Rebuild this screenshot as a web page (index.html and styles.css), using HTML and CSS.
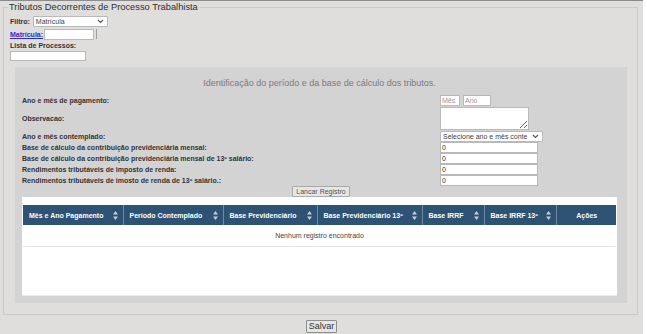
FILE: index.html
```html
<!DOCTYPE html>
<html lang="pt-BR">
<head>
<meta charset="utf-8">
<title>Tributos Decorrentes de Processo Trabalhista</title>
<link rel="stylesheet" href="styles.css">
</head>
<body>
<div class="page">
  <fieldset class="box">
    <legend class="legend">Tributos Decorrentes de Processo Trabalhista</legend>
    <div class="line">
      <span class="lbl">Filtro:</span>
      <span class="fake-select filtro">Matrícula<svg class="chev" width="7" height="5" viewBox="0 0 7 5"><path d="M1 1l2.5 2.5L6 1" fill="none" stroke="#555" stroke-width="1.1"/></svg></span>
    </div>
    <div class="line">
      <a class="link" href="#">Matrícula:</a>
      <input class="inp mat" type="text">
      <span class="stub"></span>
    </div>
    <div class="lbl block">Lista de Processos:</div>
    <input class="inp proc" type="text">

    <div class="panel">
      <div class="panel-title">Identificação do período e da base de cálculo dos tributos.</div>
      <div class="form">
        <span class="lbl">Ano e mês de pagamento:</span>
        <span class="pair"><input class="inp mes" type="text" placeholder="Mês"><input class="inp ano" type="text" placeholder="Ano"></span>

        <span class="lbl">Observacao:</span>
        <textarea class="ta"></textarea>

        <span class="lbl">Ano e mês contemplado:</span>
        <span class="fake-select contemplado">Selecione ano e mês conte<svg class="chev" width="7" height="5" viewBox="0 0 7 5"><path d="M1 1l2.5 2.5L6 1" fill="none" stroke="#555" stroke-width="1.1"/></svg></span>

        <span class="lbl">Base de cálculo da contribuição previdenciária mensal:</span>
        <input class="inp num" type="text" value="0">

        <span class="lbl">Base de cálculo da contribuição previdenciária mensal de 13º salário:</span>
        <input class="inp num" type="text" value="0">

        <span class="lbl">Rendimentos tributáveis de imposto de renda:</span>
        <input class="inp num" type="text" value="0">

        <span class="lbl">Rendimentos tributáveis de imosto de renda de 13º salário.:</span>
        <input class="inp num" type="text" value="0">
      </div>
      <div class="btn-row"><button class="btn small" type="button">Lancar Registro</button></div>
      <div class="table-wrap">
        <table class="grid">
          <colgroup>
            <col class="c1"><col class="c2"><col class="c3"><col class="c4"><col class="c5"><col class="c6"><col class="c7">
          </colgroup>
          <thead>
            <tr>
              <th><span class="th">Mês e Ano Pagamento<svg class="sort" width="5" height="9" viewBox="0 0 5 9"><path d="M2.5 0L5 3.5H0z M2.5 9L0 5.5H5z" fill="#c3ccd6"/></svg></span></th>
              <th><span class="th">Período Contemplado<svg class="sort" width="5" height="9" viewBox="0 0 5 9"><path d="M2.5 0L5 3.5H0z M2.5 9L0 5.5H5z" fill="#c3ccd6"/></svg></span></th>
              <th><span class="th">Base Previdenciário<svg class="sort" width="5" height="9" viewBox="0 0 5 9"><path d="M2.5 0L5 3.5H0z M2.5 9L0 5.5H5z" fill="#c3ccd6"/></svg></span></th>
              <th><span class="th">Base Previdenciário 13º<svg class="sort" width="5" height="9" viewBox="0 0 5 9"><path d="M2.5 0L5 3.5H0z M2.5 9L0 5.5H5z" fill="#c3ccd6"/></svg></span></th>
              <th><span class="th">Base IRRF<svg class="sort" width="5" height="9" viewBox="0 0 5 9"><path d="M2.5 0L5 3.5H0z M2.5 9L0 5.5H5z" fill="#c3ccd6"/></svg></span></th>
              <th><span class="th">Base IRRF 13º<svg class="sort" width="5" height="9" viewBox="0 0 5 9"><path d="M2.5 0L5 3.5H0z M2.5 9L0 5.5H5z" fill="#c3ccd6"/></svg></span></th>
              <th><span class="th center">Ações</span></th>
            </tr>
          </thead>
          <tbody>
            <tr><td class="empty" colspan="7">Nenhum registro encontrado</td></tr>
          </tbody>
        </table>
      </div>
    </div>
  </fieldset>
  <div class="save-row"><button class="btn big" type="button">Salvar</button></div>
</div>
</body>
</html>
```

FILE: styles.css
```css
html, body {
  margin: 0;
  padding: 0;
  background: #ffffff;
}

body {
  font-family: "Liberation Sans", Arial, sans-serif;
  color: #333;
}

.page {
  width: 643px;
  height: 334px;
  background: #dfdedc;
  border-top: 1px solid #8c8c8c;
  box-sizing: border-box;
  overflow: hidden;
}

.box {
  margin: 0 5px 0 3px;
  padding: 2px 0 11px 6px;
  border: 1px solid #cacac8;
  min-width: 0;
}

.legend {
  font-size: 9.3px;
  line-height: 12px;
  color: #2e2e2e;
  padding: 0 1px;
  margin-left: -2px;
}

.line {
  display: flex;
  align-items: center;
  height: 12px;
  margin-bottom: 1px;
}

.line + .line {
  margin-top: 1px;
}

.lbl {
  font-size: 7px;
  font-weight: bold;
  color: #333;
}

.lbl.block {
  display: block;
  margin-top: 0;
  line-height: 10px;
}

.link {
  font-size: 7px;
  font-weight: bold;
  color: #2b2bd6;
  text-decoration: underline;
}

.line .lbl {
  margin-right: 3px;
}

.fake-select {
  display: inline-flex;
  align-items: center;
  justify-content: space-between;
  box-sizing: border-box;
  height: 11px;
  background: #fff;
  border: 1px solid #b9b9b9;
  border-radius: 1px;
  font-size: 7px;
  color: #444;
  padding: 0 3px 0 2px;
  white-space: nowrap;
  overflow: hidden;
}

.filtro {
  width: 75px;
}

.contemplado {
  width: 103px;
}

.chev {
  flex: none;
  margin-left: 2px;
}

.inp {
  box-sizing: border-box;
  height: 11px;
  margin: 0;
  padding: 0 1px;
  border: 1px solid #b9b9b9;
  background: #fff;
  font-family: "Liberation Sans", Arial, sans-serif;
  font-size: 7px;
  color: #333;
  outline: none;
}

.inp::placeholder {
  color: #9a9a9a;
}

.mat {
  width: 50px;
  margin-left: 1px;
}

.stub {
  width: 1px;
  height: 10px;
  margin-left: 2px;
  border-left: 1px solid #9f9f9f;
}

.proc {
  display: block;
  width: 76px;
  height: 10px;
  margin-top: 0;
}

.panel {
  width: 612px;
  box-sizing: border-box;
  margin: 6px 0 0 5px;
  padding: 10px 10px 7px 7px;
  background: #d3d3d3;
}

.panel-title {
  text-align: center;
  font-size: 9px;
  line-height: 12px;
  color: #7a7a7a;
  margin-bottom: 6px;
}

.form {
  display: grid;
  grid-template-columns: 418px auto;
  align-items: center;
}

.form > .lbl {
  line-height: 10px;
}

.pair {
  display: flex;
  gap: 3px;
  height: 12px;
  align-items: flex-start;
}

.mes {
  width: 20px;
}

.ano {
  width: 28px;
}

.ta {
  box-sizing: border-box;
  width: 89px;
  height: 23px;
  margin: 0 0 1px;
  padding: 1px;
  border: 1px solid #b9b9b9;
  background: #fff;
  font-size: 7px;
  display: block;
}

.num {
  width: 98px;
  height: 11px;
  margin-bottom: 0;
}

.btn-row {
  display: flex;
  justify-content: center;
  padding-left: 3px;
}

.btn {
  font-family: "Liberation Sans", Arial, sans-serif;
  background: #e6e6e6;
  color: #333;
  border: 1px solid #a9a9a9;
  border-radius: 1px;
  margin: 0;
  cursor: default;
}

.btn.small {
  font-size: 7px;
  height: 11px;
  line-height: 9px;
  padding: 0 3px;
  color: #555;
}

.btn.big {
  font-size: 9px;
  height: 13px;
  line-height: 11px;
  padding: 0 2px;
  border-color: #8d8d8d;
}

.table-wrap {
  background: #fff;
  height: 99px;
  box-sizing: border-box;
  padding: 8px 1px 0 1px;
  border-bottom: 1px solid #ececec;
}

.grid {
  width: 593px;
  border-collapse: collapse;
  table-layout: fixed;
}

.grid th {
  background: #2d5274;
  color: #fff;
  font-size: 7px;
  font-weight: bold;
  height: 20px;
  padding: 0 5px 0 6px;
  text-align: left;
  border-left: 1px solid #6d8aa4;
  overflow: hidden;
}

.grid th:first-child {
  border-left: none;
}

.th {
  display: flex;
  align-items: center;
  justify-content: space-between;
  white-space: nowrap;
}

.th.center {
  justify-content: center;
}

.sort {
  flex: none;
}

.c1 { width: 100px; }
.c2 { width: 100px; }
.c3 { width: 94px; }
.c4 { width: 105px; }
.c5 { width: 62px; }
.c6 { width: 72px; }
.c7 { width: 60px; }

.grid td.empty {
  height: 21px;
  text-align: center;
  font-size: 7px;
  color: #444;
  border-bottom: 1px solid #e4e4e4;
  padding: 0;
}

.save-row {
  display: flex;
  justify-content: center;
  margin-top: 5px;
}
```
